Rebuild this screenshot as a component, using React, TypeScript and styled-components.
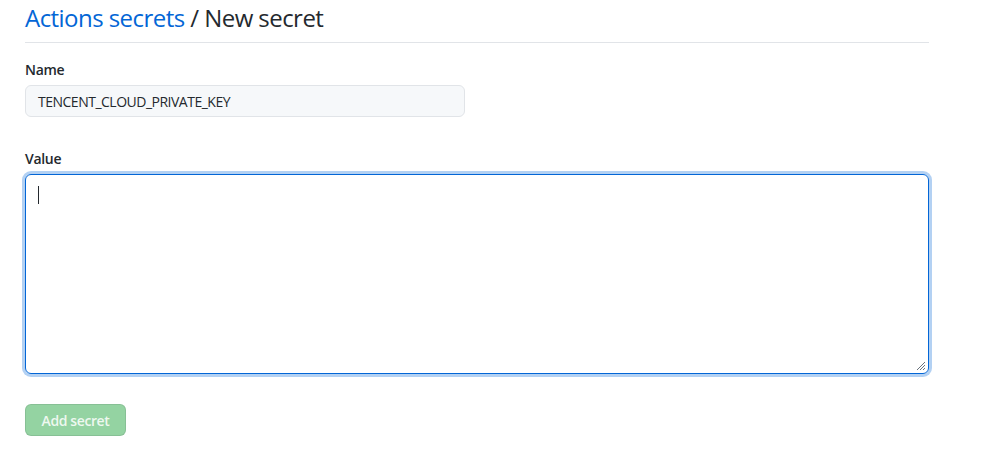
import styled, { createGlobalStyle } from "styled-components";

const GlobalStyle = createGlobalStyle`
  body {
    margin: 0;
    background: #fff;
    color: #24292e;
    font-family: "Open Sans", "Noto Sans", "Liberation Sans", sans-serif;
  }
`;

const Page = styled.div`
  padding: 0 64px 0 25px;
  width: 904px;
`;

const Header = styled.div`
  border-bottom: 1px solid #e1e4e8;
  padding: 3px 0 9px;
`;

const Title = styled.h2`
  font-size: 24px;
  font-weight: 400;
  letter-spacing: -0.55px;
  line-height: 30px;
  margin: 0;
`;

const Crumb = styled.a`
  color: #0366d6;
  text-decoration: none;
`;

const Field = styled.div`
  margin-top: ${(props: { gap: number }) => props.gap}px;
`;

const Label = styled.label`
  display: block;
  font-size: 14px;
  font-weight: 600;
  letter-spacing: -0.3px;
  line-height: 21px;
  margin-bottom: 5px;
`;

const Input = styled.div`
  align-items: center;
  background: #f6f8fa;
  border: 1px solid #e1e4e8;
  border-radius: 6px;
  box-sizing: border-box;
  display: flex;
  font-size: 14px;
  height: 32px;
  letter-spacing: -0.5px;
  padding: 0 12px;
  width: 440px;
`;

const TextArea = styled.div`
  border: 1px solid #0366d6;
  border-radius: 6px;
  box-shadow: 0 0 0 3px rgba(3, 102, 214, 0.3);
  box-sizing: border-box;
  height: 200px;
  padding: 11px 12px;
  position: relative;
  width: 904px;
`;

const Caret = styled.div`
  background: #24292e;
  height: 18px;
  width: 1px;
`;

const Grip = styled.svg`
  bottom: 2px;
  position: absolute;
  right: 2px;
`;

const Button = styled.button`
  background: #94d3a2;
  border: 1px solid rgba(27, 31, 35, 0.1);
  border-radius: 6px;
  color: rgba(255, 255, 255, 0.85);
  font-family: inherit;
  font-size: 14px;
  font-weight: 600;
  height: 32px;
  letter-spacing: -0.4px;
  margin-top: 30px;
  padding: 0;
  white-space: nowrap;
  width: 101px;
`;

const App = () => {
  return (
    <Page>
      <GlobalStyle />
      <Header>
        <Title>
          <Crumb href="#">Actions secrets</Crumb> / New secret
        </Title>
      </Header>
      <Field gap={16}>
        <Label>Name</Label>
        <Input>TENCENT_CLOUD_PRIVATE_KEY</Input>
      </Field>
      <Field gap={31}>
        <Label>Value</Label>
        <TextArea>
          <Caret />
          <Grip width="10" height="10" viewBox="0 0 10 10">
            <path d="M9 1 L1 9 M9 4 L4 9 M9 7 L7 9" stroke="#6a737d" strokeWidth="1" />
          </Grip>
        </TextArea>
      </Field>
      <Button>Add secret</Button>
    </Page>
  );
};

export default App;
